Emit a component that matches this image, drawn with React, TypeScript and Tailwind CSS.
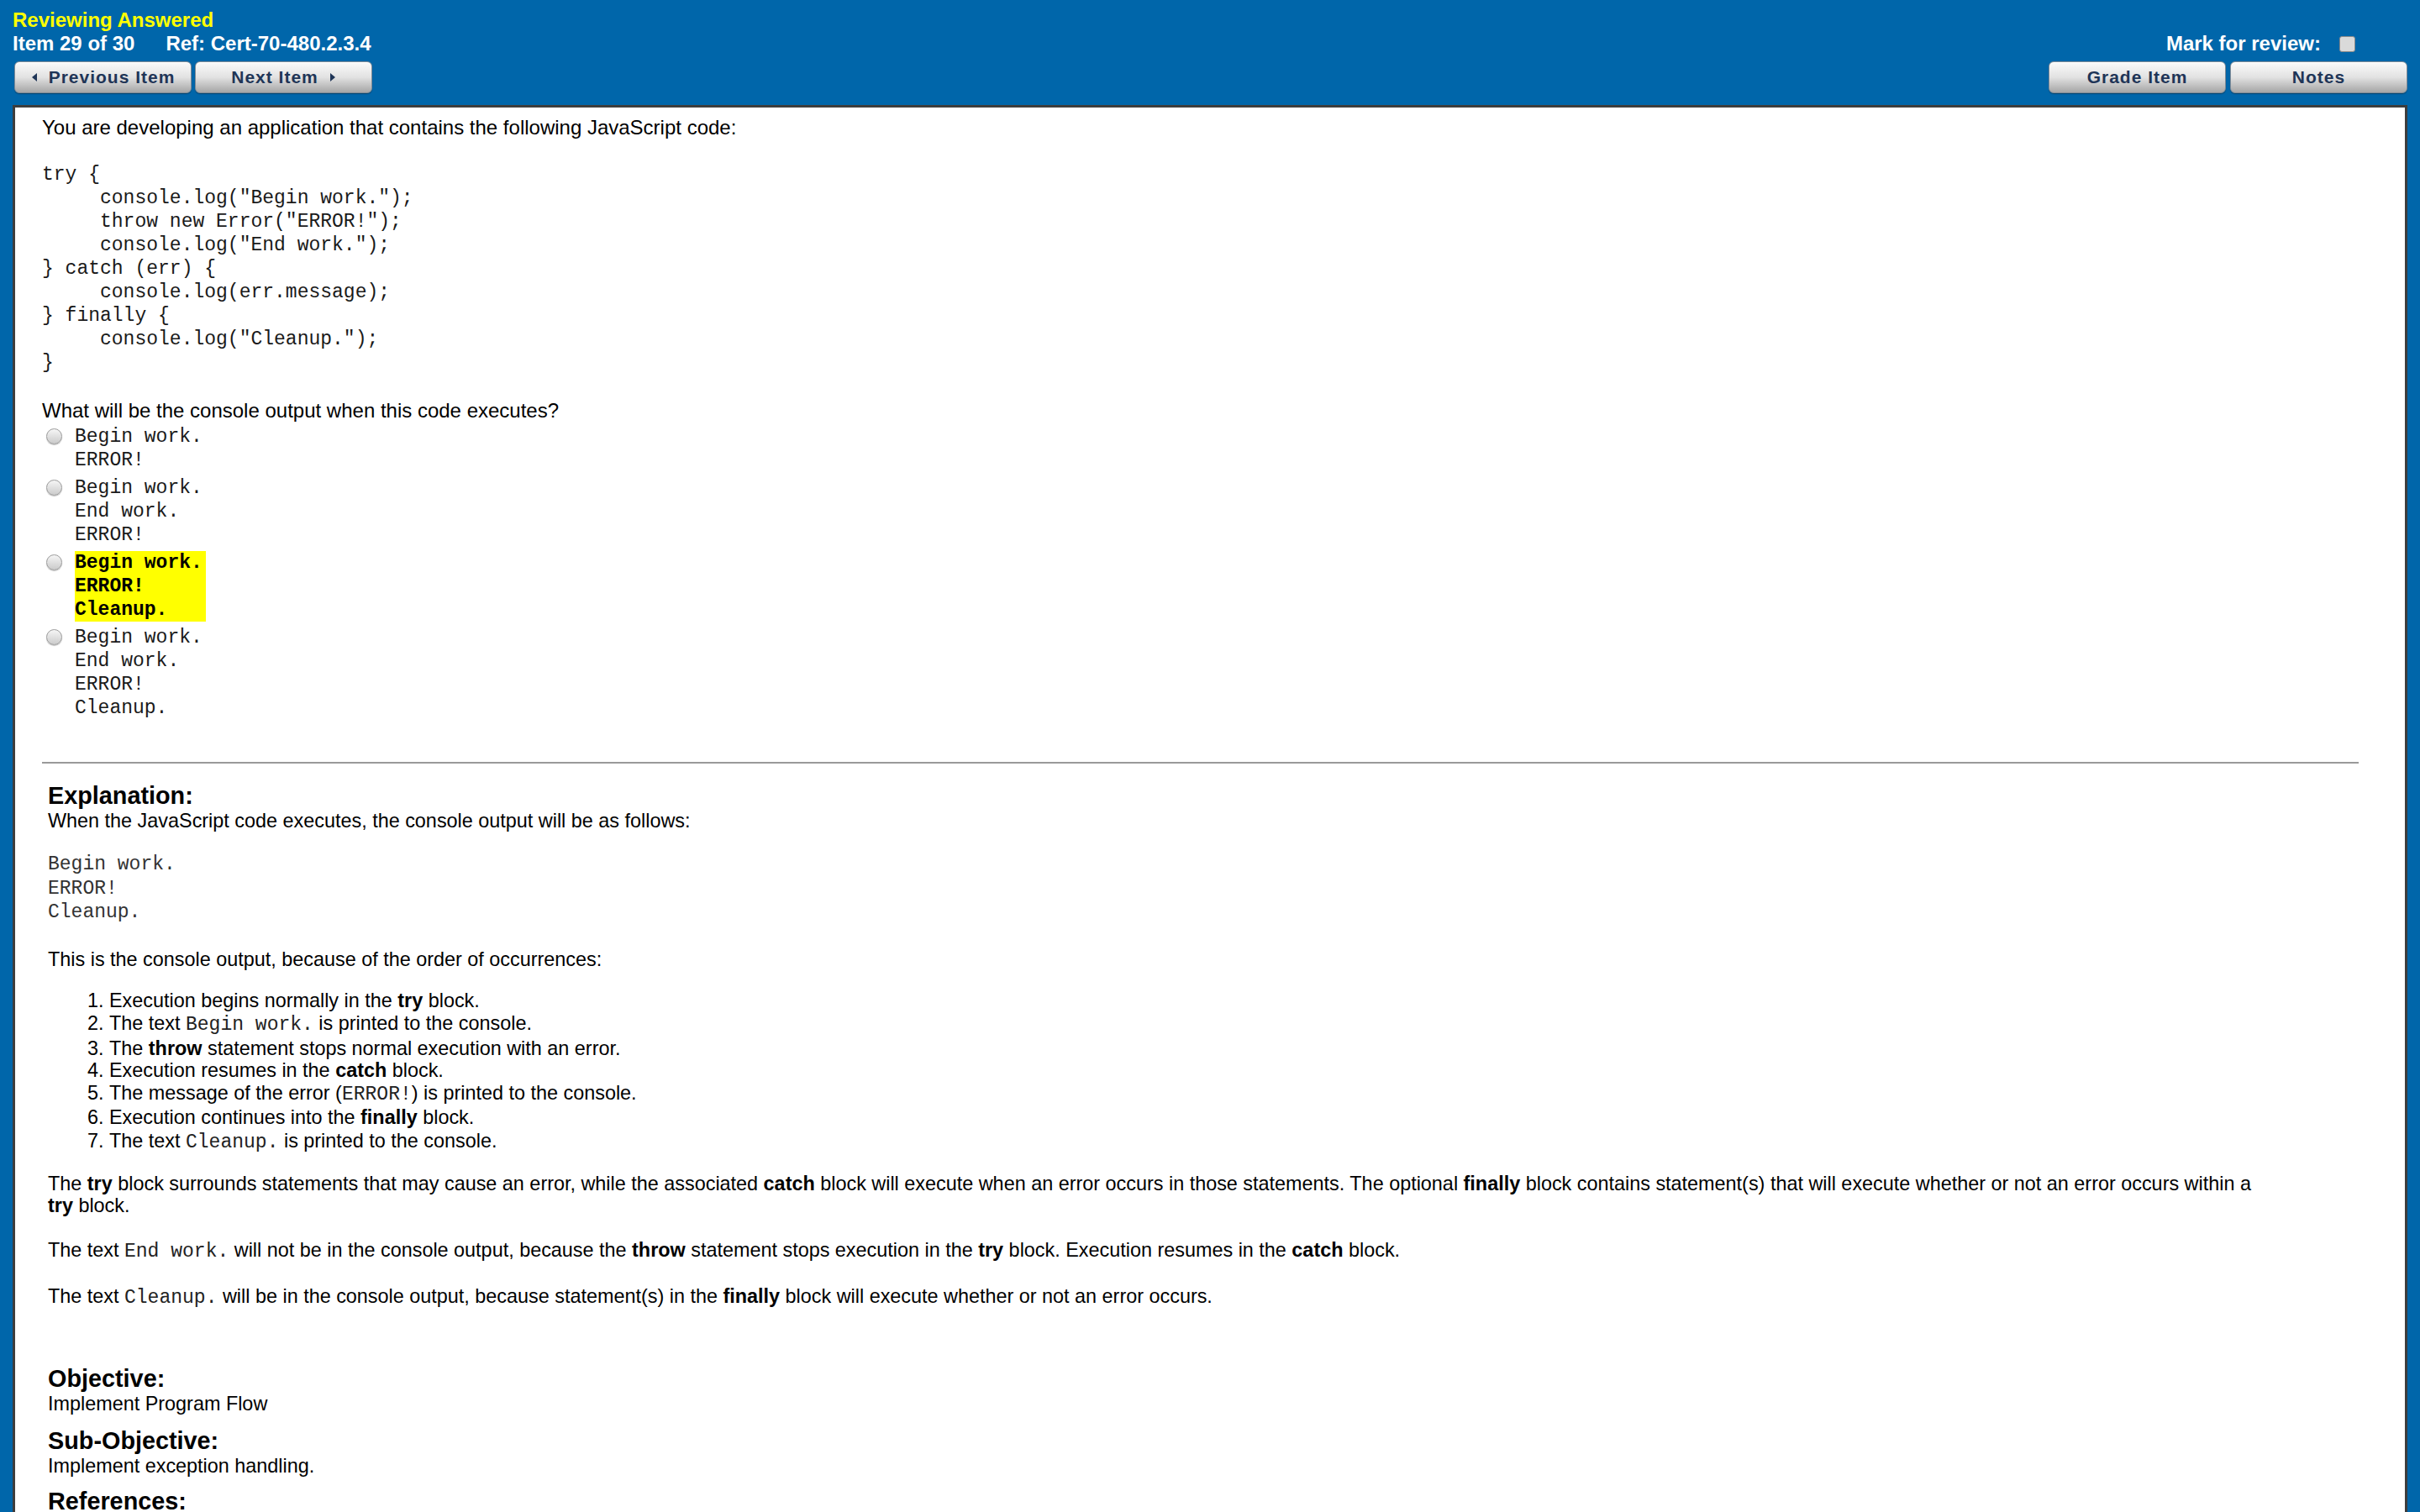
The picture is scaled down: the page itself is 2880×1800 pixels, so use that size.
import React from "react";

const sans = "font-['Liberation_Sans',Arial,Helvetica,sans-serif]";
const mono = "font-['Liberation_Mono','Courier_New',monospace]";

const codeLines = [
  "try {",
  '     console.log("Begin work.");',
  '     throw new Error("ERROR!");',
  '     console.log("End work.");',
  "} catch (err) {",
  "     console.log(err.message);",
  "} finally {",
  '     console.log("Cleanup.");',
  "}",
];

const options = [
  ["Begin work.", "ERROR!"],
  ["Begin work.", "End work.", "ERROR!"],
  ["Begin work.", "ERROR!", "Cleanup."],
  ["Begin work.", "End work.", "ERROR!", "Cleanup."],
];

const correct = 2;

function Arrow({ dir }: { dir: "left" | "right" }) {
  return (
    <svg width="8" height="12" viewBox="0 0 8 12" className="shrink-0">
      {dir === "left" ? (
        <path d="M7 1 L1 6 L7 11 Z" fill="#1f3557" />
      ) : (
        <path d="M1 1 L7 6 L1 11 Z" fill="#1f3557" />
      )}
    </svg>
  );
}

function NavButton({ children }: { children: React.ReactNode }) {
  return (
    <button className="flex h-[38px] w-[211px] items-center justify-center gap-[13px] rounded-[6px] border border-[#7f8b97] bg-linear-to-b from-[#fbfbfb] via-[#e2e2e2] to-[#a6a6a6] text-[21px] font-bold tracking-[1px] text-[#1f3557] shadow-[inset_0_1px_0_#ffffff,0_1px_1px_rgba(0,0,0,0.35)]">
      {children}
    </button>
  );
}

function Code({ children }: { children: React.ReactNode }) {
  return <span className={`${mono} text-[23px] text-[#222]`}>{children}</span>;
}

function Radio() {
  return (
    <span className="mt-[4px] block h-[19px] w-[19px] shrink-0 rounded-full border border-[#9c9c9c] bg-linear-to-b from-[#f6f6f6] to-[#cbcbcb] shadow-[0_1px_1px_rgba(0,0,0,0.25)]" />
  );
}

export default function App() {
  return (
    <div className={`${sans} min-h-screen bg-[#0066aa] px-[15px] text-black`}>
      <header className="flex items-start justify-between pt-[10px]">
        <div className="flex flex-col">
          <div className="text-[24px] font-bold leading-[28px] text-[#ffff00]">Reviewing Answered</div>
          <div className="flex text-[24px] font-bold leading-[28px] text-white">
            <span>Item 29 of 30</span>
            <span className="ml-[37px]">Ref: Cert-70-480.2.3.4</span>
          </div>
          <div className="mt-[7px] flex gap-[4px] pl-[2px]">
            <NavButton>
              <Arrow dir="left" />
              <span>Previous Item</span>
            </NavButton>
            <NavButton>
              <span>Next Item</span>
              <Arrow dir="right" />
            </NavButton>
          </div>
        </div>
        <div className="flex flex-col items-end">
          <div className="h-[28px]" />
          <div className="flex h-[28px] items-center pr-[62px] text-[24px] font-bold text-white">
            <span>Mark for review:</span>
            <span className="ml-[22px] block h-[19px] w-[19px] rounded-[3px] border border-[#8a8a8a] bg-[#dadada]" />
          </div>
          <div className="mt-[7px] flex gap-[5px]">
            <NavButton>Grade Item</NavButton>
            <NavButton>Notes</NavButton>
          </div>
        </div>
      </header>

      <main className="mt-[14px] border-[3px] border-[#3d3d3d] bg-white pb-[80px] pl-[32px] pr-[55px] pt-[10px] text-[24px]">
        <p className="leading-[28px]">You are developing an application that contains the following JavaScript code:</p>
        <pre className={`${mono} mt-[28px] text-[23px] leading-[28px] text-[#1a1a1a]`}>
          {codeLines.join("\n")}
        </pre>

        <p className="mt-[29px] leading-[28px]">What will be the console output when this code executes?</p>
        <div className="mt-[3px] flex flex-col gap-[5px]">
          {options.map((lines, i) => (
            <div key={i} className="flex items-start gap-[15px] pl-[5px]">
              <Radio />
              <div
                className={`${mono} text-[23px] leading-[28px] ${
                  i === correct ? "bg-[#ffff00] pr-[4px] font-bold text-black" : "text-[#1a1a1a]"
                }`}
              >
                {lines.map((l) => (
                  <div key={l}>{l}</div>
                ))}
              </div>
            </div>
          ))}
        </div>

        <hr className="mt-[50px] border-t-2 border-[#9a9a9a]" />

        <section className="pl-[7px] pr-[115px] pt-[22px] text-[23.4px]">
          <h2 className="text-[28.8px] font-bold leading-[32px]">Explanation:</h2>
          <p className="leading-[28px]">When the JavaScript code executes, the console output will be as follows:</p>
          <pre className={`${mono} mt-[24px] text-[23px] leading-[28.5px] text-[#333]`}>
            {"Begin work.\nERROR!\nCleanup."}
          </pre>
          <p className="mt-[27px] leading-[28px]">This is the console output, because of the order of occurrences:</p>
          <ol className="mt-[22px] list-outside list-decimal pl-[73px]">
            <li className="leading-[26px]">
              Execution begins normally in the <b>try</b> block.
            </li>
            <li className="leading-[29px]">
              The text <Code>Begin work.</Code> is printed to the console.
            </li>
            <li className="leading-[26px]">
              The <b>throw</b> statement stops normal execution with an error.
            </li>
            <li className="leading-[26px]">
              Execution resumes in the <b>catch</b> block.
            </li>
            <li className="leading-[28px]">
              The message of the error (<Code>ERROR!</Code>) is printed to the console.
            </li>
            <li className="leading-[27px]">
              Execution continues into the <b>finally</b> block.
            </li>
            <li className="leading-[29px]">
              The text <Code>Cleanup.</Code> is printed to the console.
            </li>
          </ol>

          <p className="mt-[21px] leading-[26px]">
            The <b>try</b> block surrounds statements that may cause an error, while the associated <b>catch</b> block
            will execute when an error occurs in those statements. The optional <b>finally</b> block contains
            statement(s) that will execute whether or not an error occurs within a <b>try</b> block.
          </p>
          <p className="mt-[26px] leading-[29px]">
            The text <Code>End work.</Code> will not be in the console output, because the <b>throw</b> statement stops
            execution in the <b>try</b> block. Execution resumes in the <b>catch</b> block.
          </p>
          <p className="mt-[24px] leading-[29px]">
            The text <Code>Cleanup.</Code> will be in the console output, because statement(s) in the <b>finally</b>{" "}
            block will execute whether or not an error occurs.
          </p>

          <h2 className="mt-[65px] text-[28.8px] font-bold leading-[32px]">Objective:</h2>
          <p className="leading-[28px]">Implement Program Flow</p>
          <h2 className="mt-[14px] text-[28.8px] font-bold leading-[32px]">Sub-Objective:</h2>
          <p className="leading-[28px]">Implement exception handling.</p>
          <h2 className="mt-[12px] text-[28.8px] font-bold leading-[32px]">References:</h2>
          <p className="leading-[28px]">Error handling in JavaScript</p>
        </section>
      </main>
    </div>
  );
}
